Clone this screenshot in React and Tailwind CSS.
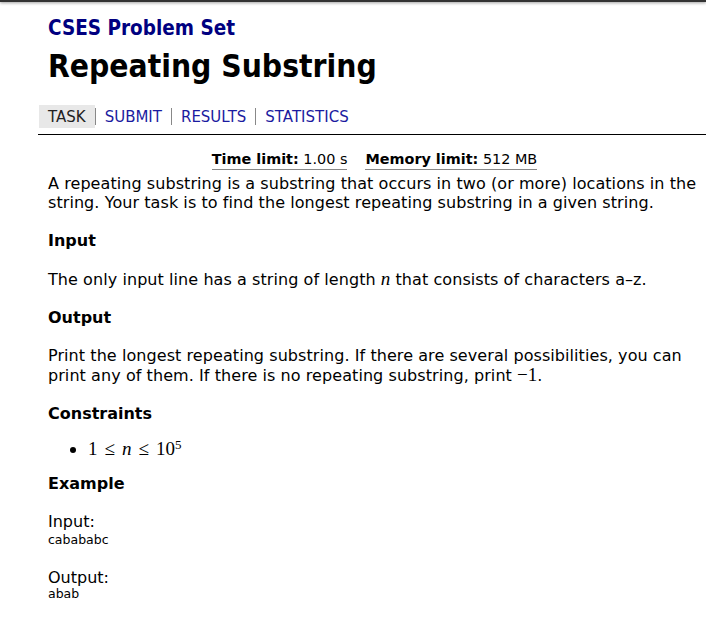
import React from "react";

export default function App() {
  return (
    <div className="w-[706px] h-[630px] overflow-hidden bg-white text-black font-['DejaVu_Sans',Verdana,sans-serif]">
      <div className="h-[2px] bg-[#333333] shadow-[0_1px_3px_rgba(0,0,0,0.45)]" />
      <div className="ml-[38px] w-[673px]">
        <div className="pl-[10px] [font-stretch:condensed]">
          <div className="mt-[14px] text-[20.5px] leading-[24px] font-bold text-[#000080]">CSES Problem Set</div>
          <h1 className="mt-[8px] text-[31.5px] leading-[36px] font-bold">Repeating Substring</h1>
        </div>
        <div className="mt-[21px] pl-px flex items-center text-[15px]">
          <span className="bg-[#e8e8e8] px-[9px] h-[23px] pt-[2px] leading-[21px] text-[#222]">TASK</span>
          <span className="w-px h-[17px] bg-[#888]" />
          <span className="px-[9px] h-[23px] pt-[2px] leading-[21px] text-[#1b1ba0]">SUBMIT</span>
          <span className="w-px h-[17px] bg-[#888]" />
          <span className="px-[9px] h-[23px] pt-[2px] leading-[21px] text-[#1b1ba0]">RESULTS</span>
          <span className="w-px h-[17px] bg-[#888]" />
          <span className="px-[9px] h-[23px] pt-[2px] leading-[21px] text-[#1b1ba0]">STATISTICS</span>
        </div>
        <div className="mt-[6px] h-px bg-black" />
        <div className="mt-[14px] flex justify-center gap-[18px] text-[14.4px] leading-[20px]">
          <span className="border-b border-[#888]"><b>Time limit:</b> 1.00 s</span>
          <span className="border-b border-[#888]"><b>Memory limit:</b> 512 MB</span>
        </div>
        <div className="pl-[10px] pr-[8px] text-[16px] leading-[19px] tracking-[0.07px]">
          <p className="mt-[4px]">A repeating substring is a substring that occurs in two (or more) locations in the string. Your task is to find the longest repeating substring in a given string.</p>
          <h2 className="mt-[19px] font-bold tracking-normal">Input</h2>
          <p className="mt-[19px]">The only input line has a string of length <span className="font-['Liberation_Serif',serif] italic text-[19px] leading-none tracking-normal">n</span> that consists of characters a–z.</p>
          <h2 className="mt-[19px] font-bold tracking-normal">Output</h2>
          <p className="mt-[19px]">Print the longest repeating substring. If there are several possibilities, you can print any of them. If there is no repeating substring, print <span className="font-['Liberation_Serif',serif] text-[19px] leading-none tracking-normal">−1</span>.</p>
          <h2 className="mt-[19px] font-bold tracking-normal">Constraints</h2>
          <ul className="mt-[16px] pl-[40px] list-disc">
            <li className="font-['Liberation_Serif',serif] text-[19px] tracking-normal">
              <span>1</span>
              <span className="mx-[7px]">≤</span>
              <i>n</i>
              <span className="mx-[7px]">≤</span>
              <span>10</span>
              <sup className="text-[13px]">5</sup>
            </li>
          </ul>
          <h2 className="mt-[16px] font-bold tracking-normal">Example</h2>
          <div className="mt-[19px] tracking-normal">Input:</div>
          <div className="mt-[1px] text-[12.5px] leading-[15px] tracking-normal">cabababc</div>
          <div className="mt-[21px] tracking-normal">Output:</div>
          <div className="-mt-[1px] text-[12.5px] leading-[15px] tracking-normal">abab</div>
        </div>
      </div>
    </div>
  );
}
